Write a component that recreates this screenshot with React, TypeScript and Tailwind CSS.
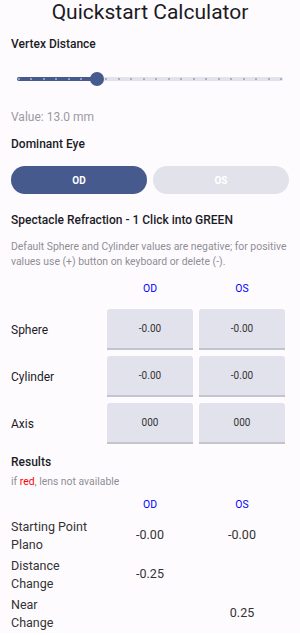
import React from "react";

const font = { fontFamily: "Roboto, 'Noto Sans', sans-serif" };

function Slider() {
  const ticks = Array.from({ length: 22 }, (_, i) => i);
  return (
    <div className="relative mx-[17px] h-[30px]">
      <div className="absolute left-0 right-0 top-[12px] h-[4px] rounded-full bg-[#e1e2ec]" />
      <div className="absolute left-0 top-[12px] h-[4px] w-[80px] rounded-l-full bg-[#465a8e]" />
      {ticks.map((i) => (
        <div
          key={i}
          className={`absolute top-[13px] h-[2px] w-[2px] rounded-full ${
            i * 12.5 + 1.5 < 80 ? "bg-[#aab3cf]" : "bg-[#9aa0b0]"
          }`}
          style={{ left: i * 12.5 + 0.5 }}
        />
      ))}
      <div className="absolute left-[73px] top-[7px] h-[14px] w-[14px] rounded-full bg-[#465a8e]" />
    </div>
  );
}

function InputBox({ value }: { value: string }) {
  return (
    <div className="flex h-[41px] items-center justify-center rounded-t-[3px] border-b-2 border-[#c4c4cc] bg-[#e1e2ec] text-[10px] text-[#333]">
      {value}
    </div>
  );
}

export default function App() {
  const rows = [
    { label: "Sphere", od: "-0.00", os: "-0.00" },
    { label: "Cylinder", od: "-0.00", os: "-0.00" },
    { label: "Axis", od: "000", os: "000" },
  ];
  const results = [
    { a: "Starting Point", b: "Plano", od: "-0.00", os: "-0.00" },
    { a: "Distance", b: "Change", od: "-0.25", os: "" },
    { a: "Near", b: "Change", od: "", os: "0.25" },
  ];
  return (
    <div className="min-h-[635px] w-[300px] bg-[#fefbff] text-[#1b1b1f]" style={font}>
      <h1 className="-mt-[2px] text-center text-[21px] leading-[28px] text-[#1b1b1f]">Quickstart Calculator</h1>

      <div className="px-[11px] pt-[10px] text-[12px] font-medium leading-[16px]">Vertex Distance</div>
      <div className="pt-[13px]">
        <Slider />
      </div>
      <div className="px-[11px] pt-[14px] text-[12px] leading-[16px] text-[#9a9aa0]">Value: 13.0 mm</div>

      <div className="px-[11px] pt-[11px] text-[12px] font-medium leading-[16px]">Dominant Eye</div>
      <div className="flex gap-[6px] pl-[11px] pr-[11px] pt-[14px]">
        <div className="flex h-[28px] flex-1 items-center justify-center rounded-full bg-[#465a8e] text-[10px] font-bold text-white">
          OD
        </div>
        <div className="flex h-[28px] flex-1 items-center justify-center rounded-full bg-[#e2e2ea] text-[10px] font-bold text-white">
          OS
        </div>
      </div>

      <div className="px-[11px] pt-[18px] text-[12px] font-medium leading-[16px]">
        Spectacle Refraction - 1 Click into GREEN
      </div>
      <p className="px-[11px] pt-[11px] text-[10.4px] leading-[15px] text-[#8e8e94]">
        Default Sphere and Cylinder values are negative; for positive values use (+) button on keyboard or delete (-).
      </p>

      <div className="grid grid-cols-[90px_86px_86px] gap-x-[6px] gap-y-[6px] px-[11px] pt-[13px]">
        <div />
        <div className="mb-[7px] text-center text-[10.4px] leading-[14px] text-[#0000ff]">OD</div>
        <div className="mb-[7px] text-center text-[10.4px] leading-[14px] text-[#0000ff]">OS</div>
        {rows.map((r) => (
          <React.Fragment key={r.label}>
            <div className="flex items-center text-[12px]">{r.label}</div>
            <InputBox value={r.od} />
            <InputBox value={r.os} />
          </React.Fragment>
        ))}
      </div>

      <div className="px-[11px] pt-[10px] text-[12px] font-medium leading-[16px]">Results</div>
      <div className="px-[11px] pt-[5px] text-[10.4px] leading-[14px] text-[#8e8e94]">
        if <span className="text-[#ff0000]">red</span>, lens not available
      </div>

      <div className="grid grid-cols-[90px_86px_86px] gap-x-[6px] gap-y-[4px] px-[11px] pt-[9px]">
        <div />
        <div className="mb-[2px] text-center text-[10.4px] leading-[14px] text-[#0000ff]">OD</div>
        <div className="mb-[2px] text-center text-[10.4px] leading-[14px] text-[#0000ff]">OS</div>
        {results.map((r) => (
          <React.Fragment key={r.a}>
            <div className="text-[12.5px] leading-[17.5px] text-[#333]">
              {r.a}
              <br />
              {r.b}
            </div>
            <div className="flex items-center justify-center text-[12.5px] text-[#333]">{r.od}</div>
            <div className="flex items-center justify-center text-[12.5px] text-[#333]">{r.os}</div>
          </React.Fragment>
        ))}
      </div>
    </div>
  );
}
